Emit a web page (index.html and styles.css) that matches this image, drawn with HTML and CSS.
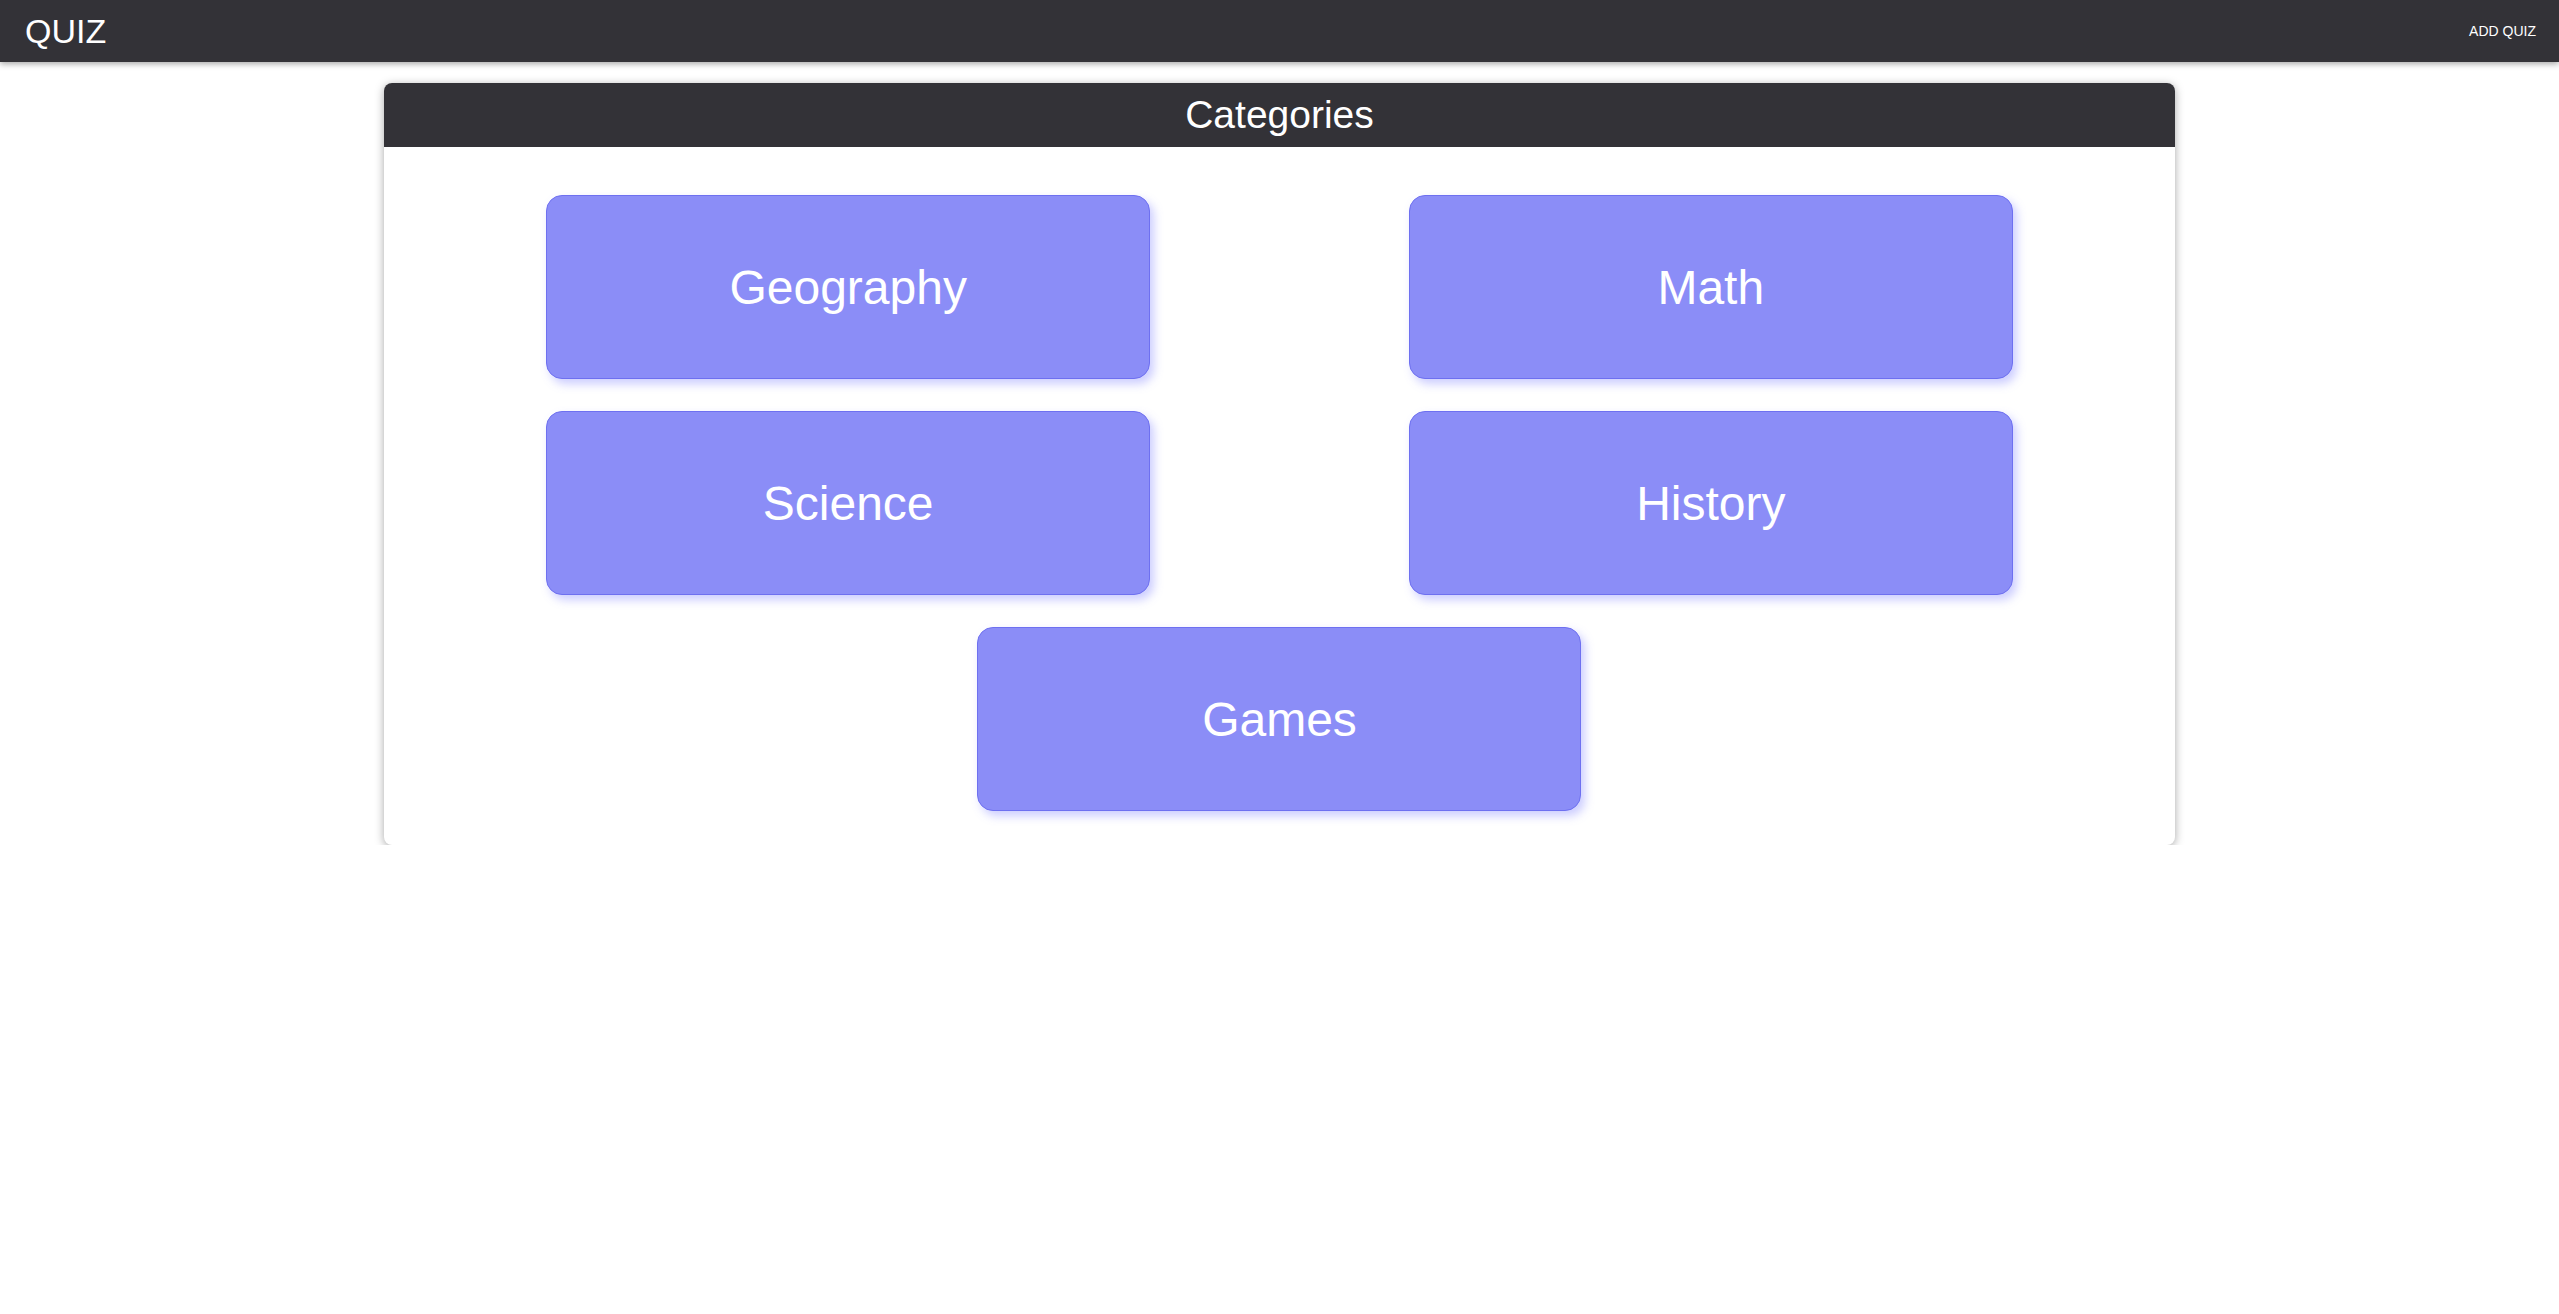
FILE: index.html
```html
<!DOCTYPE html>
<html>
<head>
<meta charset="utf-8">
<title>Quiz</title>
<link rel="stylesheet" href="styles.css">
</head>
<body>
<header class="navbar">
  <div class="brand">QUIZ</div>
  <a class="nav-link">ADD QUIZ</a>
</header>
<main class="card">
  <div class="card-header">Categories</div>
  <div class="card-body">
    <div class="cell"><div class="category">Geography</div></div>
    <div class="cell"><div class="category">Math</div></div>
    <div class="cell"><div class="category">Science</div></div>
    <div class="cell"><div class="category">History</div></div>
    <div class="cell"><div class="category">Games</div></div>
  </div>
</main>
</body>
</html>
```

FILE: styles.css
```css
html, body {
  margin: 0;
  padding: 0;
  background: #ffffff;
  font-family: "Liberation Sans", Arial, sans-serif;
}

.navbar {
  height: 62px;
  background: #333237;
  display: flex;
  align-items: center;
  justify-content: space-between;
  padding: 0 23px 0 25px;
  box-shadow: 0 2px 6px rgba(0, 0, 0, 0.35);
  position: relative;
  z-index: 1;
}

.brand {
  color: #ffffff;
  font-size: 34px;
  line-height: 1;
}

.nav-link {
  color: #ffffff;
  font-size: 14px;
}

.card {
  width: 70%;
  margin: 21px auto 0;
  border-radius: 8px;
  overflow: hidden;
  background: #ffffff;
  box-shadow: 0 2px 10px rgba(0, 0, 0, 0.35);
}

.card-header {
  height: 64px;
  background: #333237;
  color: #ffffff;
  font-size: 39px;
  display: flex;
  align-items: center;
  justify-content: center;
}

.card-body {
  display: flex;
  flex-wrap: wrap;
  justify-content: center;
  row-gap: 32px;
  padding: 48px 33px 34px;
}

.cell {
  width: 50%;
  display: flex;
  justify-content: center;
}

.category {
  width: 602px;
  height: 182px;
  box-sizing: content-box;
  background: #8b8df7;
  border: 1px solid #6e70f0;
  border-radius: 16px;
  color: #ffffff;
  font-size: 48px;
  display: flex;
  align-items: center;
  justify-content: center;
  box-shadow: 4px 5px 10px rgba(110, 112, 255, 0.35);
}
```
